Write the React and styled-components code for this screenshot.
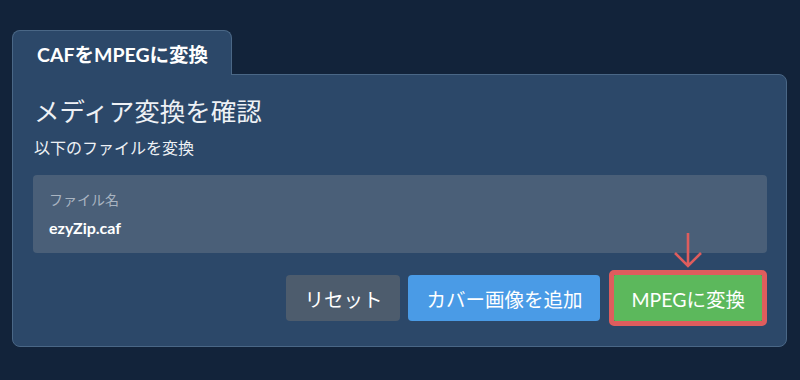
import styled, { createGlobalStyle } from 'styled-components'

const Global = createGlobalStyle`
  html, body {
    margin: 0;
    padding: 0;
    background: #12233a;
  }
  body {
    font-family: Lato, "Noto Sans CJK JP", sans-serif;
    color: #fff;
  }
`

const Page = styled.div`
  width: 800px;
  height: 380px;
  padding: 30px 13px 0 12px;
  box-sizing: border-box;
`

const Tab = styled.div`
  display: inline-flex;
  align-items: center;
  height: 45px;
  width: 220px;
  box-sizing: border-box;
  padding: 0 0 0 24px;
  background: #2c4869;
  border: 1px solid #4a6786;
  border-bottom: none;
  border-radius: 8px 8px 0 0;
  font-size: 19.5px;
  font-weight: 700;
  white-space: nowrap;
  position: relative;
  z-index: 1;
  margin-bottom: -1px;
`

const Panel = styled.div`
  background: #2c4869;
  border: 1px solid #4a6786;
  border-radius: 0 8px 8px 8px;
  padding: 20px 19px 25px 20px;
`

const Heading = styled.h1`
  margin: 0;
  font-size: 25.5px;
  font-weight: 400;
  line-height: 32px;
  color: #eef1f5;
  padding-left: 1px;
`

const Sub = styled.p`
  margin: 10px 0 0;
  font-size: 16px;
  line-height: 22px;
  color: #eef1f5;
  padding-left: 1px;
`

const Field = styled.div`
  margin-top: 16px;
  background: #4a5f78;
  border-radius: 4px;
  height: 78px;
  box-sizing: border-box;
  padding: 16px 16px 0;
`

const FieldLabel = styled.div`
  font-size: 14px;
  line-height: 18px;
  color: #a9b4c1;
`

const FieldValue = styled.div`
  margin-top: 9px;
  font-size: 16px;
  line-height: 20px;
  font-weight: 700;
  color: #fff;
`

const Actions = styled.div`
  display: flex;
  justify-content: flex-end;
  align-items: center;
  gap: 8px;
  margin-top: 22px;
`

const Button = styled.button`
  font-family: inherit;
  font-size: 19.5px;
  color: #fff;
  height: 46px;
  padding: 0 ${p => p.$pad || 18}px;
  border: none;
  border-radius: ${p => p.$radius ?? 4}px;
  background: ${p => p.$bg};
  cursor: pointer;
`

const Highlight = styled.div`
  position: relative;
  display: flex;
  border: 5px solid #de5d5d;
  border-radius: 5px;
  margin: -5px 0 -5px 1px;
`

const Arrow = styled.svg`
  position: absolute;
  left: 50%;
  top: -44px;
  transform: translateX(-50%);
`

export default function App() {
  return (
    <>
      <Global />
      <Page>
        <Tab>CAFをMPEGに変換</Tab>
        <Panel>
          <Heading>メディア変換を確認</Heading>
          <Sub>以下のファイルを変換</Sub>
          <Field>
            <FieldLabel>ファイル名</FieldLabel>
            <FieldValue>ezyZip.caf</FieldValue>
          </Field>
          <Actions>
            <Button $bg="#4d5c6d">リセット</Button>
            <Button $bg="#4a9be6">カバー画像を追加</Button>
            <Highlight>
              <Arrow width="30" height="37" viewBox="0 0 30 37">
                <path d="M15 2 V35 M2 22 L15 35 L28 22" fill="none" stroke="#de5d5d" strokeWidth="2.6" />
              </Arrow>
              <Button $bg="#5cb85c" $pad={17} $radius={1}>MPEGに変換</Button>
            </Highlight>
          </Actions>
        </Panel>
      </Page>
    </>
  )
}
